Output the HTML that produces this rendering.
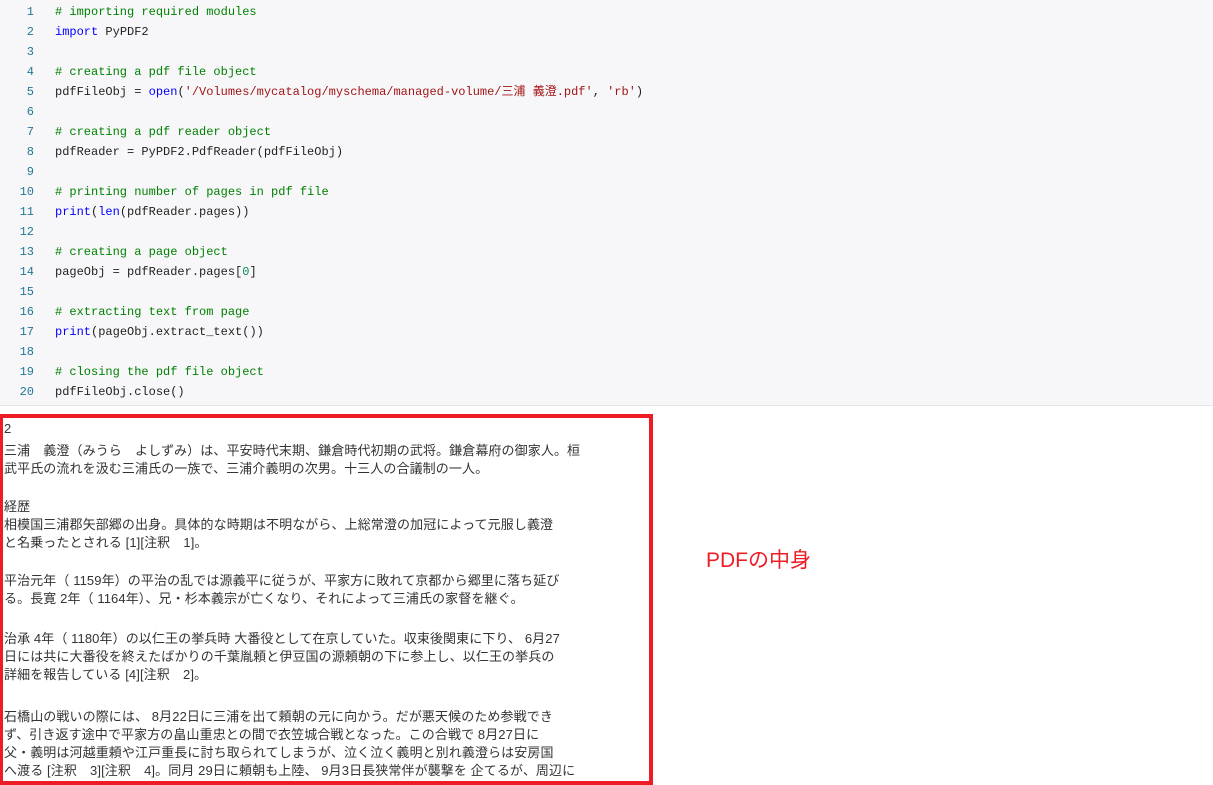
<!DOCTYPE html>
<html><head><meta charset="utf-8"><style>
body{margin:0;width:1213px;height:784px;background:#fff;overflow:hidden;font-family:"Liberation Mono","Noto Sans CJK JP",monospace;}
.code{position:absolute;left:0;top:0;width:1213px;height:405px;background:#f7f7f9;border-bottom:1px solid #e6e6e6;}
.ln{position:absolute;left:0;width:34px;text-align:right;color:#237893;font-size:12px;line-height:16px;}
.cl{position:absolute;left:55px;font-size:12px;line-height:16px;height:16px;color:#1f1f1f;white-space:pre;}
.c{color:#008000}.k{color:#0000ff}.s{color:#a31515}.n{color:#098658}
.out{position:absolute;left:0;top:414px;width:646px;height:363px;border:4px solid #ee1c25;border-left-width:3px;}
.ol{position:absolute;left:4px;font-family:"Liberation Sans","Noto Sans CJK JP",sans-serif;font-size:13px;letter-spacing:0.1px;color:#333;white-space:pre;}
.lab{position:absolute;left:706px;top:544px;color:#ee1c25;font-family:"Liberation Sans","Noto Sans CJK JP",sans-serif;font-size:21px;}
</style></head><body>
<div class="code">
<div class="ln" style="top:4px">1</div><div class="cl c" style="top:4px"># importing required modules</div>
<div class="ln" style="top:24px">2</div><div class="cl" style="top:24px"><span class="k">import</span> PyPDF2</div>
<div class="ln" style="top:44px">3</div>
<div class="ln" style="top:64px">4</div><div class="cl c" style="top:64px"># creating a pdf file object</div>
<div class="ln" style="top:84px">5</div><div class="cl" style="top:84px">pdfFileObj = <span class="k">open</span>(<span class="s">'/Volumes/mycatalog/myschema/managed-volume/三浦 義澄.pdf'</span>, <span class="s">'rb'</span>)</div>
<div class="ln" style="top:104px">6</div>
<div class="ln" style="top:124px">7</div><div class="cl c" style="top:124px"># creating a pdf reader object</div>
<div class="ln" style="top:144px">8</div><div class="cl" style="top:144px">pdfReader = PyPDF2.PdfReader(pdfFileObj)</div>
<div class="ln" style="top:164px">9</div>
<div class="ln" style="top:184px">10</div><div class="cl c" style="top:184px"># printing number of pages in pdf file</div>
<div class="ln" style="top:204px">11</div><div class="cl" style="top:204px"><span class="k">print</span>(<span class="k">len</span>(pdfReader.pages))</div>
<div class="ln" style="top:224px">12</div>
<div class="ln" style="top:244px">13</div><div class="cl c" style="top:244px"># creating a page object</div>
<div class="ln" style="top:264px">14</div><div class="cl" style="top:264px">pageObj = pdfReader.pages[<span class="n">0</span>]</div>
<div class="ln" style="top:284px">15</div>
<div class="ln" style="top:304px">16</div><div class="cl c" style="top:304px"># extracting text from page</div>
<div class="ln" style="top:324px">17</div><div class="cl" style="top:324px"><span class="k">print</span>(pageObj.extract_text())</div>
<div class="ln" style="top:344px">18</div>
<div class="ln" style="top:364px">19</div><div class="cl c" style="top:364px"># closing the pdf file object</div>
<div class="ln" style="top:384px">20</div><div class="cl" style="top:384px">pdfFileObj.close()</div>
</div>
<div class="out"></div>
<div class="ol" style="top:421px">2</div>
<div class="ol" style="top:440px">三浦　義澄（みうら　よしずみ）は、平安時代末期、鎌倉時代初期の武将。鎌倉幕府の御家人。桓</div>
<div class="ol" style="top:458px">武平氏の流れを汲む三浦氏の一族で、三浦介義明の次男。十三人の合議制の一人。</div>
<div class="ol" style="top:496px">経歴</div>
<div class="ol" style="top:514px">相模国三浦郡矢部郷の出身。具体的な時期は不明ながら、上総常澄の加冠によって元服し義澄</div>
<div class="ol" style="top:532px">と名乗ったとされる [1][注釈　1]。</div>
<div class="ol" style="top:570px">平治元年（ 1159年）の平治の乱では源義平に従うが、平家方に敗れて京都から郷里に落ち延び</div>
<div class="ol" style="top:588px">る。長寛 2年（ 1164年）、兄・杉本義宗が亡くなり、それによって三浦氏の家督を継ぐ。</div>
<div class="ol" style="top:628px">治承 4年（ 1180年）の以仁王の挙兵時 大番役として在京していた。収束後関東に下り、 6月27</div>
<div class="ol" style="top:646px">日には共に大番役を終えたばかりの千葉胤頼と伊豆国の源頼朝の下に参上し、以仁王の挙兵の</div>
<div class="ol" style="top:664px">詳細を報告している [4][注釈　2]。</div>
<div class="ol" style="top:706px">石橋山の戦いの際には、 8月22日に三浦を出て頼朝の元に向かう。だが悪天候のため参戦でき</div>
<div class="ol" style="top:724px">ず、引き返す途中で平家方の畠山重忠との間で衣笠城合戦となった。この合戦で 8月27日に</div>
<div class="ol" style="top:742px">父・義明は河越重頼や江戸重長に討ち取られてしまうが、泣く泣く義明と別れ義澄らは安房国</div>
<div class="ol" style="top:760px">へ渡る [注釈　3][注釈　4]。同月 29日に頼朝も上陸、 9月3日長狭常伴が襲撃を 企てるが、周辺に</div>
<div class="lab">PDFの中身</div>
</body></html>
